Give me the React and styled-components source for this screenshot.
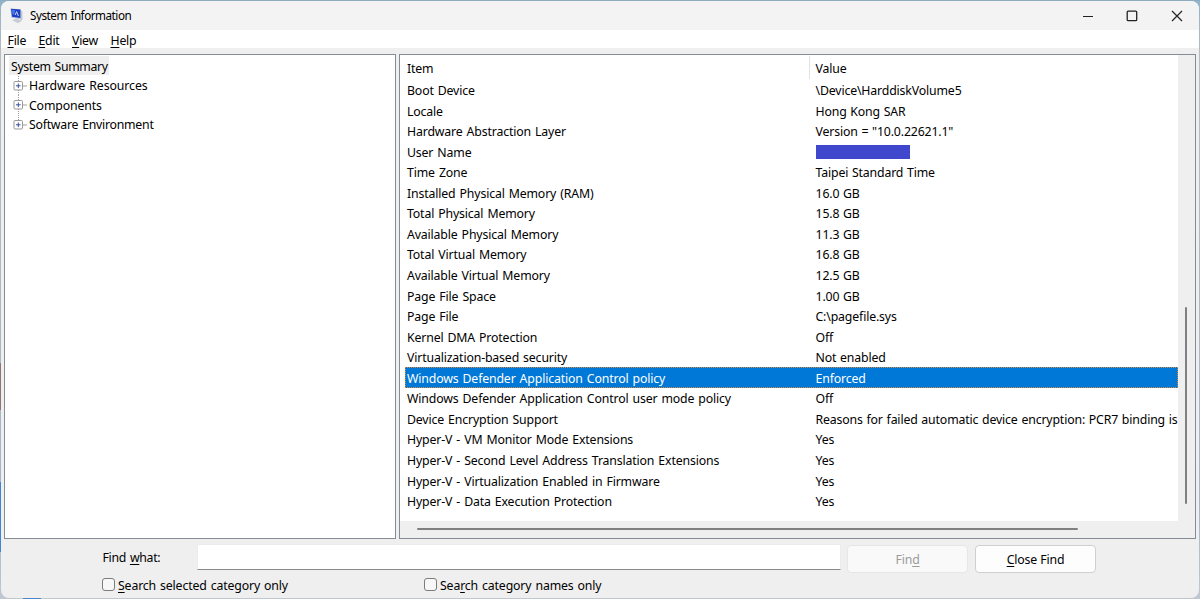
import React, { useState } from 'react';
import styled, { createGlobalStyle } from 'styled-components';

const GlobalStyle = createGlobalStyle`
  * {
    box-sizing: border-box;
  }
  body {
    margin: 0;
    overflow: hidden;
    font-family: "Noto Sans", "Open Sans", sans-serif;
    font-size: 12.3px;
    letter-spacing: -0.15px;
    word-spacing: 1px;
    color: #000;
  }
  u {
    text-decoration: underline;
    text-decoration-thickness: 1px;
    text-underline-offset: 2px;
    text-decoration-skip-ink: none;
  }
`;

const Desktop = styled.div`
  width: 1200px;
  height: 599px;
  padding: 1px;
  background:
    linear-gradient(#4a86c8, #4a86c8) 23px 598px / 18px 1px no-repeat,
    linear-gradient(#3f86d2, #3f86d2) 0 482px / 1px 70px no-repeat,
    linear-gradient(#8f7478, #8f7478) 0 363px / 1px 47px no-repeat,
    linear-gradient(#8fabc0, #8fabc0) 0 0 / 1200px 1px no-repeat,
    linear-gradient(#8fb2cd, #b9bcc0 60px, #a3b5c6 500px, #bfc8d0);
`;

const Window = styled.div`
  display: flex;
  flex-direction: column;
  width: 1198px;
  height: 597px;
  border-radius: 8px;
  background: #efefef;
  overflow: hidden;
`;

const TitleBar = styled.header`
  display: flex;
  align-items: center;
  height: 29px;
  padding-left: 8px;
  background: #f3f3f3;
`;

const Title = styled.h1`
  flex: 1;
  margin: 0 0 1px 6px;
  font-size: 11.7px;
  font-weight: 400;
  letter-spacing: -0.48px;
`;

const WindowButton = styled.button`
  display: flex;
  align-items: center;
  justify-content: center;
  width: 44.5px;
  height: 28px;
  padding: 0;
  border: 0;
  background: none;
  color: #222;
`;

const MenuBar = styled.nav`
  display: flex;
  gap: 13px;
  height: 18px;
  padding-left: 6.5px;
  background: #fff;
`;

const MenuItem = styled.span`
  width: ${(props) => props.$width}px;
  line-height: 21px;
  letter-spacing: -0.25px;
`;

const Panels = styled.main`
  display: grid;
  grid-template-columns: 392px 797px;
  gap: 3px;
  height: 485px;
  margin: 6px 3px 0;
`;

const Panel = styled.section`
  border: 1px solid #868c96;
  background: #fff;
  overflow: hidden;
`;

const TreePanel = styled(Panel)`
  padding: 1px 4px;
`;

const TreeRow = styled.div`
  display: flex;
  align-items: center;
  height: 19.6px;
`;

const TreeRoot = styled.span`
  width: 100px;
  height: 19px;
  padding-left: 2px;
  line-height: 21px;
  background: #efefef;
  letter-spacing: -0.35px;
  white-space: nowrap;
`;

const TreeLabel = styled.span`
  margin-left: 2px;
  padding-top: 0.5px;
  letter-spacing: ${(props) => props.$spacing}px;
  white-space: nowrap;
`;

const ListPanel = styled(Panel)`
  display: grid;
  grid-template-columns: 778px 17px;
  grid-template-rows: 466px 17px;
  padding: 0;
`;

const ListView = styled.div`
  padding-left: 5px;
  overflow: hidden;
`;

const ListHeader = styled.div`
  display: grid;
  grid-template-columns: 404px 1fr;
  height: 24.6px;
  padding-top: 1px;
  line-height: 25px;
`;

const HeaderCell = styled.span`
  height: 23px;
  padding-left: ${(props) => (props.$divided ? 5.5 : 2)}px;
  border-left: ${(props) => (props.$divided ? '1px solid #e2e2e2' : '0')};
`;

const ListRow = styled.div`
  display: grid;
  grid-template-columns: 410.5px 1fr;
  align-items: center;
  height: 20.55px;
  width: 772.5px;
  line-height: 20px;
  white-space: nowrap;
  background: ${(props) => (props.$selected ? '#0078d7' : 'transparent')};
  color: ${(props) => (props.$selected ? '#fff' : 'inherit')};
  outline: ${(props) => (props.$selected ? '1px dotted #d98a3a' : 'none')};
  outline-offset: -1px;
`;

const Cell = styled.span`
  padding-top: 1.5px;
  padding-left: ${(props) => (props.$value ? 0 : 2)}px;
  line-height: 19px;
  word-spacing: ${(props) => (props.$value ? 0.7 : 1)}px;
`;

const Redacted = styled.span`
  width: 94.5px;
  height: 14px;
  background: #3f48cc;
`;

const VerticalScroll = styled.div`
  padding: 252px 0 0 7px;
  background: #efefef;
`;

const HorizontalScroll = styled.div`
  grid-column: 1 / 3;
  padding: 7px 0 0 17px;
  background: #efefef;
`;

const Thumb = styled.div`
  width: ${(props) => props.$width}px;
  height: ${(props) => props.$height}px;
  border-radius: 1px;
  background: #808080;
`;

const FindBar = styled.footer`
  padding: 5px 0 0 101px;
`;

const FindRow = styled.div`
  display: flex;
  align-items: flex-start;
`;

const FindLabel = styled.label`
  width: 95px;
  padding-left: 0.5px;
  line-height: 27px;
  letter-spacing: -0.3px;
`;

const FindInput = styled.input`
  width: 644px;
  height: 26px;
  margin-right: -1px;
  padding: 0 6px;
  border: 1px solid #ececec;
  border-bottom: 1px solid #8a8a8a;
  background: #fff;
  font: inherit;
  outline: none;
`;

const Button = styled.button`
  width: 121px;
  height: 28px;
  margin: 1px 0 0 7px;
  padding: 0;
  border: 1px solid #cfcfcf;
  border-radius: 4px;
  background: #fdfdfd;
  color: #000;
  font: inherit;
  letter-spacing: inherit;

  &:disabled {
    border-color: #e6e6e6;
    background: #f9f9f9;
    color: #9b9b9b;
  }
`;

const OptionRow = styled.div`
  display: grid;
  grid-template-columns: 322px 1fr;
  margin-top: 1px;
`;

const Option = styled.label`
  display: flex;
  align-items: center;
  gap: 3px;
  height: 20px;

  span {
    padding-top: 2px;
  }
`;

const Checkbox = styled.input`
  appearance: none;
  width: 13px;
  height: 13px;
  margin: 0;
  border: 1px solid #7c7c7c;
  border-radius: 3px;
  background: #f7f7f7;

  &:checked {
    background: #0067c0;
  }
`;

const rows = [
  ['Boot Device', '\\Device\\HarddiskVolume5'],
  ['Locale', 'Hong Kong SAR'],
  ['Hardware Abstraction Layer', 'Version = "10.0.22621.1"'],
  ['User Name', null],
  ['Time Zone', 'Taipei Standard Time'],
  ['Installed Physical Memory (RAM)', '16.0 GB'],
  ['Total Physical Memory', '15.8 GB'],
  ['Available Physical Memory', '11.3 GB'],
  ['Total Virtual Memory', '16.8 GB'],
  ['Available Virtual Memory', '12.5 GB'],
  ['Page File Space', '1.00 GB'],
  ['Page File', 'C:\\pagefile.sys'],
  ['Kernel DMA Protection', 'Off'],
  ['Virtualization-based security', 'Not enabled'],
  ['Windows Defender Application Control policy', 'Enforced'],
  ['Windows Defender Application Control user mode policy', 'Off'],
  ['Device Encryption Support', 'Reasons for failed automatic device encryption: PCR7 binding is'],
  ['Hyper-V - VM Monitor Mode Extensions', 'Yes'],
  ['Hyper-V - Second Level Address Translation Extensions', 'Yes'],
  ['Hyper-V - Virtualization Enabled in Firmware', 'Yes'],
  ['Hyper-V - Data Execution Protection', 'Yes'],
];

const categories = [
  { name: 'Hardware Resources', spacing: -0.08 },
  { name: 'Components', spacing: -0.15 },
  { name: 'Software Environment', spacing: -0.25 },
];

function AppIcon() {
  return (
    <svg width="15" height="16" viewBox="0 0 15 16">
      <path d="M11 2l2.5 1.2v8.3L11.5 13z" fill="#c3cad6" />
      <path d="M1.4 .4l10.6.8v10L2.4 9.8z" fill="#b9c4dd" />
      <path d="M2 .8l9.4.8v8.4l-8.4-1.2z" fill="#1c3fc0" />
      <path d="M3 1.8l3 .3-.6 4.6-2-.4z" fill="#4775ea" />
      <path d="M6.2 7l1.4-3.4L9.4 8" stroke="#c6d6ff" fill="none" />
      <path d="M3 12.2l4.6-1.6 5.6 2.2-4.2 2.4z" fill="#c9ced6" />
    </svg>
  );
}

function Expander({ last }) {
  return (
    <svg width="18" height="19.6" viewBox="0 0 18 19.6">
      <path d={last ? 'M9.5 0v6' : 'M9.5 0v20'} stroke="#a0a0a0" strokeDasharray="1 1" />
      <path d="M14 10h4" stroke="#a0a0a0" />
      <rect x="5" y="5.5" width="8.5" height="8.5" rx="1" fill="#fff" stroke="#989898" />
      <path d="M7 9.8h4.6M9.3 7.5v4.6" stroke="#3c4f9c" />
    </svg>
  );
}

export default function App() {
  const [selected, setSelected] = useState(14);
  const [query, setQuery] = useState('');

  return (
    <Desktop>
      <GlobalStyle />
      <Window>
        <TitleBar>
          <AppIcon />
          <Title>System Information</Title>
          <WindowButton aria-label="Minimize">
            <svg width="12" height="12"><path d="M1 6.5h10" stroke="currentColor" strokeWidth="1.2" /></svg>
          </WindowButton>
          <WindowButton aria-label="Maximize">
            <svg width="12" height="12">
              <rect x="1.2" y="1.2" width="9.5" height="9.5" rx="1" fill="none" stroke="currentColor" strokeWidth="1.3" />
            </svg>
          </WindowButton>
          <WindowButton aria-label="Close">
            <svg width="12" height="12"><path d="M1 1l10 10M11 1L1 11" stroke="currentColor" strokeWidth="1.2" /></svg>
          </WindowButton>
        </TitleBar>
        <MenuBar>
          <MenuItem $width={18}><u>F</u>ile</MenuItem>
          <MenuItem $width={20.5}><u>E</u>dit</MenuItem>
          <MenuItem $width={25.5}><u>V</u>iew</MenuItem>
          <MenuItem $width={25}><u>H</u>elp</MenuItem>
        </MenuBar>
        <Panels>
          <TreePanel>
            <TreeRow>
              <TreeRoot>System Summary</TreeRoot>
            </TreeRow>
            {categories.map(({ name, spacing }, i) => (
              <TreeRow key={name}>
                <Expander last={i === categories.length - 1} />
                <TreeLabel $spacing={spacing}>{name}</TreeLabel>
              </TreeRow>
            ))}
          </TreePanel>
          <ListPanel>
            <ListView>
              <ListHeader>
                <HeaderCell>Item</HeaderCell>
                <HeaderCell $divided>Value</HeaderCell>
              </ListHeader>
              {rows.map(([item, value], i) => (
                <ListRow key={item} $selected={i === selected} onClick={() => setSelected(i)}>
                  <Cell>{item}</Cell>
                  {value ? <Cell $value>{value}</Cell> : <Redacted />}
                </ListRow>
              ))}
            </ListView>
            <VerticalScroll>
              <Thumb $width={2} $height={197} />
            </VerticalScroll>
            <HorizontalScroll>
              <Thumb $width={661} $height={2} />
            </HorizontalScroll>
          </ListPanel>
        </Panels>
        <FindBar>
          <FindRow>
            <FindLabel htmlFor="find">Find <u>w</u>hat:</FindLabel>
            <FindInput id="find" value={query} onChange={(e) => setQuery(e.target.value)} />
            <Button disabled={!query}>Fin<u>d</u></Button>
            <Button><u>C</u>lose Find</Button>
          </FindRow>
          <OptionRow>
            <Option>
              <Checkbox type="checkbox" />
              <span><u>S</u>earch selected category only</span>
            </Option>
            <Option>
              <Checkbox type="checkbox" />
              <span>Sea<u>r</u>ch category names only</span>
            </Option>
          </OptionRow>
        </FindBar>
      </Window>
    </Desktop>
  );
}
